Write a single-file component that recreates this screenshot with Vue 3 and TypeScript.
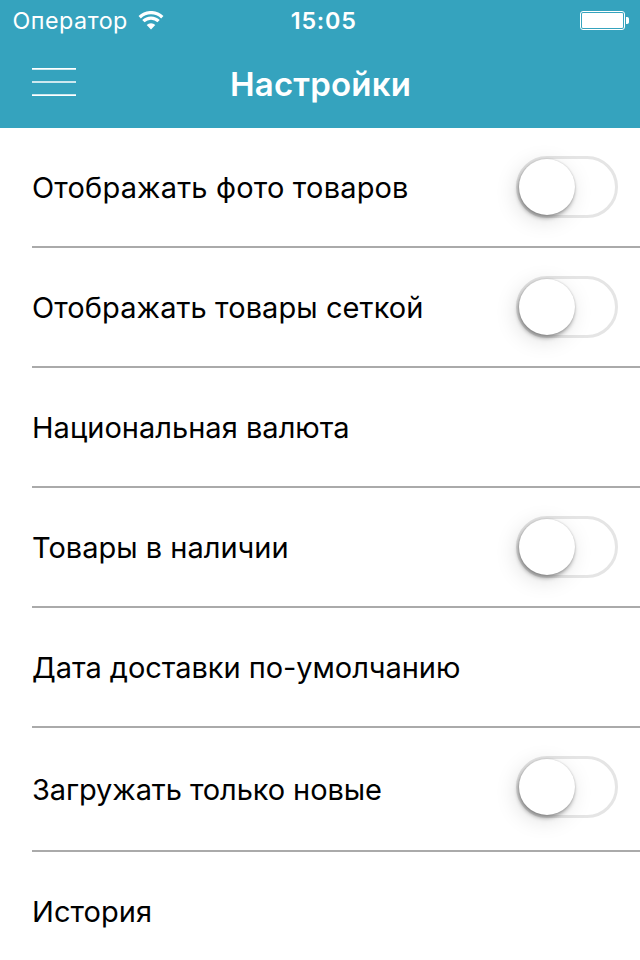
<script setup lang="ts">
import { ref } from 'vue'

interface Setting {
  label: string
  toggle: boolean
  on?: boolean
  tall?: boolean
  tracking: number
}

const settings = ref<Setting[]>([
  { label: 'Отображать фото товаров', toggle: true, on: false, tracking: 0.17 },
  { label: 'Отображать товары сеткой', toggle: true, on: false, tracking: 0.08 },
  { label: 'Национальная валюта', toggle: false, tracking: 0.02 },
  { label: 'Товары в наличии', toggle: true, on: false, tracking: 0 },
  { label: 'Дата доставки по-умолчанию', toggle: false, tracking: -0.05 },
  { label: 'Загружать только новые', toggle: true, on: false, tall: true, tracking: -0.1 },
  { label: 'История', toggle: false, tracking: 0.05 },
])

function flip(item: Setting) {
  item.on = !item.on
}
</script>

<template>
  <div class="screen">
    <header class="header">
      <div class="status">
        <div class="carrier">
          <span class="operator">Оператор</span>
          <svg class="wifi" width="26" height="19" viewBox="0 0 26 19">
            <path d="M1.7 6.2 A16.2 16.2 0 0 1 24.3 6.2" />
            <path d="M5.4 10.2 A10.8 10.8 0 0 1 20.6 10.2" />
            <path class="dot" d="M13 18.4 L8.7 14 A6.1 6.1 0 0 1 17.3 14 Z" />
          </svg>
        </div>
        <span class="time">15:05</span>
        <div class="power">
          <svg width="50" height="20" viewBox="0 0 50 20">
            <rect x="0.5" y="0.5" width="44" height="18" rx="2.5" fill="none" stroke="#fff" />
            <rect x="2" y="2" width="41" height="15" rx="1" fill="#fff" />
            <path d="M46 6 h1.2 a1.8 1.8 0 0 1 1.8 1.8 v3.4 a1.8 1.8 0 0 1 -1.8 1.8 h-1.2z" fill="#fff" />
          </svg>
        </div>
      </div>
      <div class="nav">
        <button class="menu" aria-label="Меню">
          <svg width="44" height="30" viewBox="0 0 44 30">
            <path d="M0 1.85 H44 M0 15 H44 M0 28.15 H44" stroke="#fff" stroke-width="1.7" />
          </svg>
        </button>
        <h1 class="title">Настройки</h1>
      </div>
    </header>

    <ul class="list">
      <li v-for="item in settings" :key="item.label" class="row" :class="{ tall: item.tall }">
        <span class="label" :style="{ letterSpacing: item.tracking + 'px' }">{{ item.label }}</span>
        <button
          v-if="item.toggle"
          class="switch"
          :class="{ on: item.on }"
          role="switch"
          :aria-checked="item.on"
          :aria-label="item.label"
          @click="flip(item)"
        >
          <span class="knob"></span>
        </button>
      </li>
    </ul>
  </div>
</template>

<style>
body {
  margin: 0;
  background: #fff;
}
</style>

<style scoped>
.screen {
  width: 640px;
  height: 960px;
  overflow: hidden;
  background: #fff;
  color: #000;
  font-family: Inter, 'Liberation Sans', sans-serif;
}
.header {
  height: 128px;
  background: #35a3be;
  color: #fff;
}
.status {
  display: grid;
  grid-template-columns: 1fr auto 1fr;
  align-items: center;
  height: 40px;
  padding: 0 10px 0 12.5px;
}
.carrier {
  display: flex;
  align-items: center;
  gap: 10px;
}
.operator {
  font-size: 23.3px;
  line-height: 38px;
  letter-spacing: 0.5px;
  padding-top: 2px;
}
.wifi {
  fill: none;
  stroke: #fff;
  stroke-width: 3.3;
}
.wifi .dot {
  fill: #fff;
  stroke: none;
}
.time {
  font-size: 23.3px;
  font-weight: 600;
  letter-spacing: 0.8px;
  line-height: 38px;
  padding: 2px 0 0 5px;
}
.power {
  display: flex;
  justify-content: flex-end;
  padding-top: 1px;
}
.power svg,
.menu svg {
  display: block;
}
.nav {
  display: grid;
  grid-template-columns: 44px 1fr 44px;
  align-items: center;
  height: 88px;
  padding: 0 32px;
}
.menu {
  padding: 0;
  border: 0;
  background: none;
  margin-top: -4px;
}
.title {
  margin: 0;
  text-align: center;
  font-size: 33px;
  font-weight: 600;
  letter-spacing: 0.2px;
  line-height: 88px;
  padding-left: 1px;
}
.list {
  margin: 0;
  padding: 0 0 0 32px;
  list-style: none;
}
.row {
  box-sizing: border-box;
  display: flex;
  justify-content: space-between;
  align-items: flex-start;
  height: 120px;
  padding: 28px 22px 0 0;
  border-bottom: 2px solid #aaa;
}
.row.tall {
  height: 124px;
}
.label {
  font-size: 29px;
  line-height: 63px;
  white-space: nowrap;
}
.row.tall .label {
  padding-top: 2px;
}
.switch {
  box-sizing: border-box;
  width: 102px;
  height: 62px;
  padding: 0;
  border: 3px solid #e5e5e5;
  border-radius: 31px;
  background: #fff;
}
.knob {
  display: block;
  width: 56px;
  height: 56px;
  border-radius: 50%;
  background: #fff;
  box-shadow: -1px 3px 4px rgba(0, 0, 0, 0.34), 0 0 2px rgba(0, 0, 0, 0.18), -3px 5px 22px rgba(0, 0, 0, 0.13);
}
.switch.on {
  border-color: #35a3be;
  background: #35a3be;
}
.switch.on .knob {
  margin-left: 40px;
}
</style>
